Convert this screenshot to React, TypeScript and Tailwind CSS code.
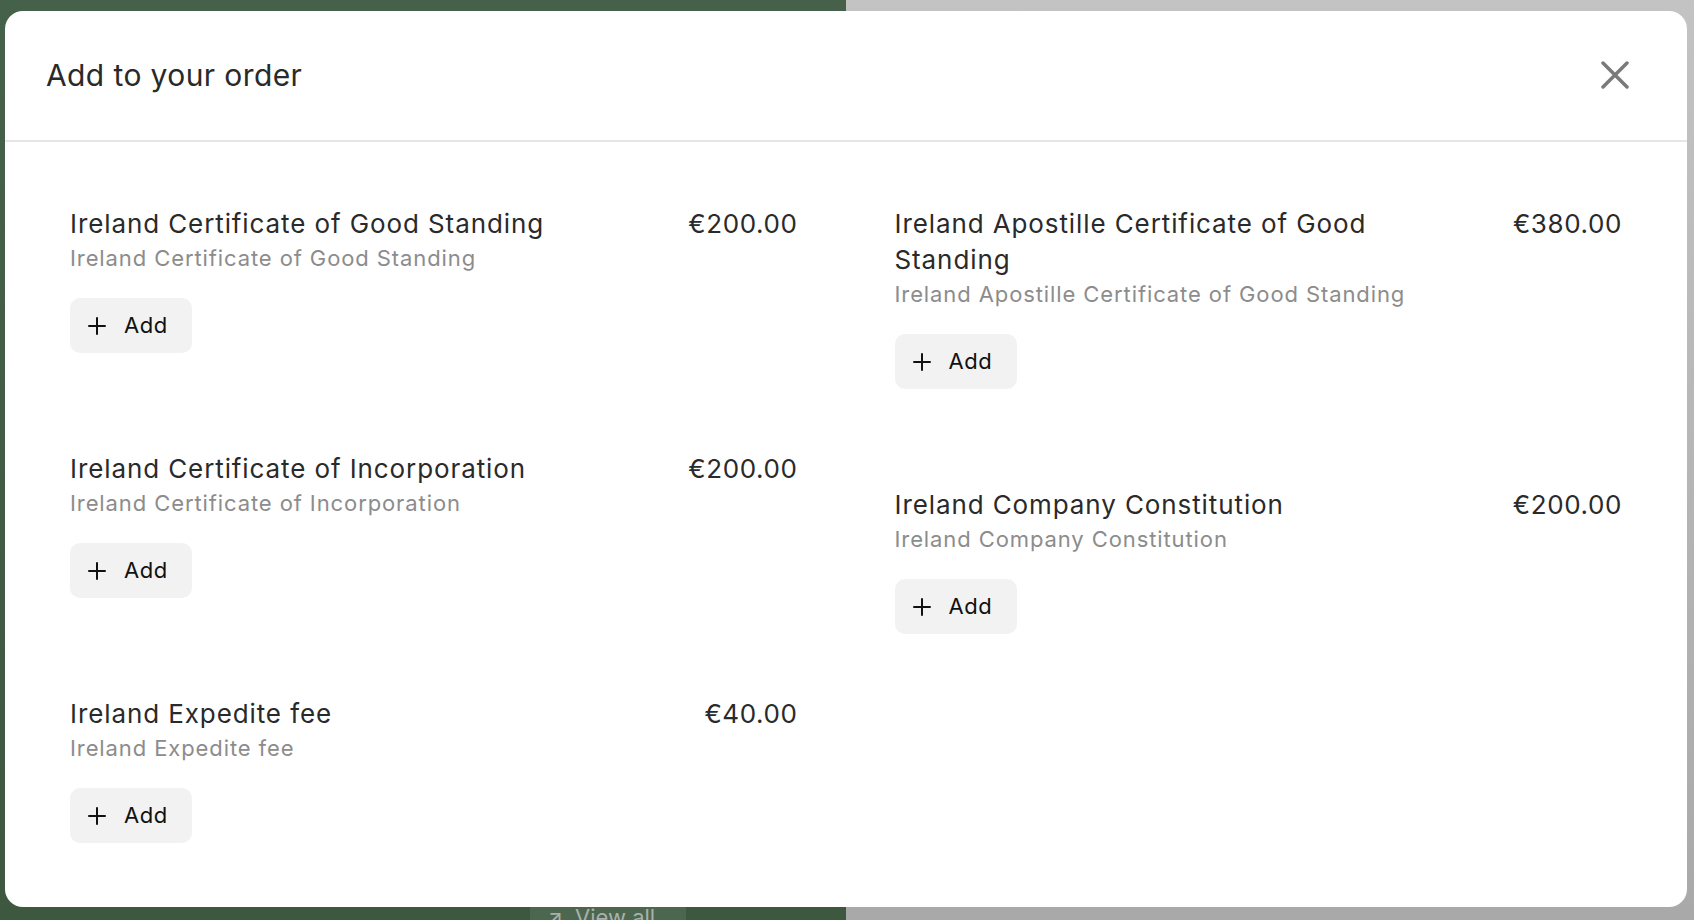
import React from "react";

interface Addon {
  id: string;
  title: string;
  subtitle: string;
  price: string;
}

const leftItems: Addon[] = [
  {
    id: "cogs",
    title: "Ireland Certificate of Good Standing",
    subtitle: "Ireland Certificate of Good Standing",
    price: "€200.00",
  },
  {
    id: "coi",
    title: "Ireland Certificate of Incorporation",
    subtitle: "Ireland Certificate of Incorporation",
    price: "€200.00",
  },
  {
    id: "expedite",
    title: "Ireland Expedite fee",
    subtitle: "Ireland Expedite fee",
    price: "€40.00",
  },
];

const rightItems: Addon[] = [
  {
    id: "apostille",
    title: "Ireland Apostille Certificate of Good Standing",
    subtitle: "Ireland Apostille Certificate of Good Standing",
    price: "€380.00",
  },
  {
    id: "constitution",
    title: "Ireland Company Constitution",
    subtitle: "Ireland Company Constitution",
    price: "€200.00",
  },
];

function PlusIcon() {
  return (
    <svg width="18" height="18" viewBox="0 0 18 18" fill="none">
      <path d="M9 1v16M1 9h16" stroke="#111" strokeWidth="2" strokeLinecap="round" />
    </svg>
  );
}

function AddonRow({ item }: { item: Addon }) {
  return (
    <div className="flex flex-col">
      <div className="flex items-start justify-between gap-6">
        <div className="flex-1">
          <p className="max-w-[505px] text-[26px] leading-[36px] tracking-[0.9px] text-[#2a2a2a]">
            {item.title}
          </p>
          <p className="text-[22px] leading-[32px] tracking-[0.9px] text-[#8c8c8c]">{item.subtitle}</p>
        </div>
        <span className="text-[26px] leading-[36px] tracking-[0.6px] text-[#2a2a2a]">{item.price}</span>
      </div>
      <button className="mt-6 flex h-[55px] w-[122px] items-center gap-[18px] rounded-[10px] bg-[#f2f2f2] pl-[18px] text-[22px] tracking-[0.5px] text-[#111]">
        <PlusIcon />
        Add
      </button>
    </div>
  );
}

export default function App() {
  return (
    <div className="relative h-[920px] w-[1694px] overflow-hidden font-['Inter',sans-serif]">
      {/* page behind the dialog */}
      <div className="flex h-full">
        <div className="flex w-[846px] flex-col justify-end bg-gradient-to-b from-[#46614a] to-[#3e573f]">
          <div className="ml-[530px] flex h-[14px] w-[156px] items-start gap-3 overflow-hidden bg-[#4d6650] pl-4 text-[22px] leading-[22px] text-[#a9b1aa]">
            <span>↗</span>
            <span>View all</span>
          </div>
        </div>
        <div className="flex-1 bg-gradient-to-b from-[#c3c3c3] to-[#a9a9a9]" />
      </div>

      {/* dialog */}
      <div className="absolute left-[5px] top-[11px] flex h-[896px] w-[1682px] flex-col rounded-[18px] bg-white">
        <div className="flex h-[131px] items-center justify-between border-b-2 border-[#e6e6e6] pl-[41px] pr-[58px]">
          <h2 className="text-[30px] tracking-[0.4px] text-[#2a2a2a]">Add to your order</h2>
          <svg className="mb-[2px]" width="28" height="28" viewBox="0 0 28 28" fill="none">
            <path d="M2 2l24 24M26 2L2 26" stroke="#7a7a7a" strokeWidth="3.5" strokeLinecap="round" />
          </svg>
        </div>
        <div className="grid grid-cols-2 gap-x-[97px] px-[65px] pt-[64px]">
          <div className="flex flex-col gap-[98px]">
            {leftItems.map((i) => (
              <AddonRow key={i.id} item={i} />
            ))}
          </div>
          <div className="flex flex-col gap-[98px]">
            {rightItems.map((i) => (
              <AddonRow key={i.id} item={i} />
            ))}
          </div>
        </div>
      </div>
    </div>
  );
}
